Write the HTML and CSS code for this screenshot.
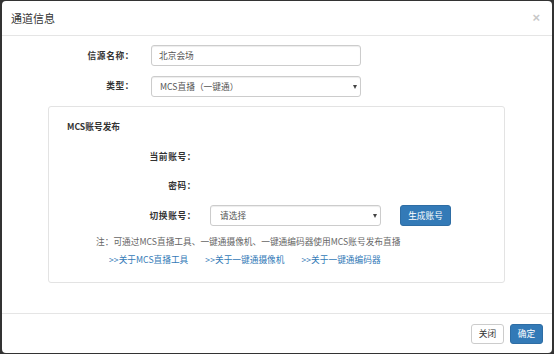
FILE: index.html
```html
<!DOCTYPE html>
<html>
<head>
  <title>通道信息</title>
  <link rel="stylesheet" href="styles.css">
</head>
<body>
  <div class="modal">
    <div class="modal-header">
      <h4 class="modal-title">通道信息</h4>
      <span class="close">&times;</span>
    </div>

    <div class="modal-body">
      <div class="form-row">
        <label class="control-label" for="source-name">信源名称：</label>
        <input type="text" id="source-name" class="form-control" value="北京会场">
      </div>

      <div class="form-row">
        <label class="control-label" for="type">类型：</label>
        <span class="select-wrap">
          <select id="type" class="form-control">
            <option>MCS直播（一键通）</option>
          </select>
        </span>
      </div>

      <div class="panel">
        <div class="panel-title">MCS账号发布</div>

        <div class="panel-row">
          <label class="control-label wide">当前账号：</label>
        </div>
        <div class="panel-row">
          <label class="control-label wide">密码：</label>
        </div>
        <div class="panel-row">
          <label class="control-label wide" for="account">切换账号：</label>
          <span class="select-wrap small">
            <select id="account" class="form-control">
              <option>请选择</option>
            </select>
          </span>
          <button class="btn btn-primary gen">生成账号</button>
        </div>

        <p class="note">注：可通过MCS直播工具、一键通摄像机、一键通编码器使用MCS账号发布直播</p>
        <div class="links">
          <a href="#">&gt;&gt;关于MCS直播工具</a>
          <a href="#">&gt;&gt;关于一键通摄像机</a>
          <a href="#">&gt;&gt;关于一键通编码器</a>
        </div>
      </div>
    </div>

    <div class="modal-footer">
      <button class="btn btn-default">关闭</button>
      <button class="btn btn-primary">确定</button>
    </div>
  </div>
</body>
</html>
```

FILE: styles.css
```css
body {
  margin: 0;
  background-color: #333;
  font-family: "Noto Sans CJK SC", "Liberation Sans", sans-serif;
  font-size: 8.7px;
  line-height: 12px;
  color: #333;
  height: 354px;
  overflow: hidden;
}

.modal {
  margin: 1px 0 0 2px;
  width: 550px;
  height: 352px;
  background-color: #fff;
  border-radius: 4px;
  display: flex;
  flex-direction: column;
}

.modal-header {
  height: 34px;
  border-bottom: 1px solid #e5e5e5;
  padding: 0 12px 0 9px;
  display: flex;
  align-items: center;
  justify-content: space-between;
}

.modal-title {
  margin: 0;
  font-size: 11px;
  font-weight: normal;
  color: #333;
}

.close {
  font-family: "Liberation Sans", sans-serif;
  font-size: 13px;
  font-weight: bold;
  color: #c8c8c8;
}

.modal-body {
  flex: 1;
  padding-top: 9px;
}

.form-row {
  display: flex;
  align-items: center;
  margin-bottom: 9.5px;
}

.control-label {
  width: 132px;
  text-align: right;
  font-weight: bold;
  letter-spacing: 0.6px;
  margin-right: 17px;
}

.control-label.wide {
  width: 129px;
  margin-right: 14px;
}

.form-control {
  box-sizing: border-box;
  width: 210px;
  height: 21px;
  padding: 0 7px;
  border: 1px solid #ccc;
  border-radius: 3px;
  box-shadow: inset 0 1px 1px rgba(0, 0, 0, .075);
  font-family: inherit;
  font-size: 8.7px;
  color: #555;
  background-color: #fff;
  outline: none;
}

.select-wrap {
  position: relative;
  display: inline-block;
}

.select-wrap select {
  appearance: none;
  -webkit-appearance: none;
  padding-left: 8px;
}

.select-wrap::after {
  content: "";
  position: absolute;
  right: 4px;
  top: 9px;
  border-left: 2.5px solid transparent;
  border-right: 2.5px solid transparent;
  border-top: 4px solid #444;
}

.select-wrap.small select {
  width: 171px;
  padding-left: 9px;
}

.panel {
  margin-left: 46px;
  width: 457px;
  box-sizing: border-box;
  height: 177px;
  border: 1px solid #e3e3e3;
  border-radius: 3px;
  padding: 14px 18px;
}

.panel-title {
  font-weight: bold;
  margin-bottom: 13px;
}

.panel-row {
  display: flex;
  align-items: center;
  height: 21px;
  margin-bottom: 8.5px;
}

.btn {
  box-sizing: border-box;
  height: 21px;
  padding: 0;
  border: 1px solid transparent;
  border-radius: 3px;
  font-family: inherit;
  font-size: 8.7px;
  white-space: nowrap;
  cursor: pointer;
}

.btn-primary {
  background-color: #337ab7;
  border-color: #2e6da4;
  color: #fff;
}

.btn-default {
  background-color: #fff;
  border-color: #ccc;
  color: #333;
}

.gen {
  margin-left: 19px;
  width: 51px;
}

.note {
  margin: 10px 0 0 29px;
  color: #666;
}

.links {
  margin: 6px 0 0 42px;
  display: flex;
  gap: 17px;
}

.links a {
  color: #337ab7;
  text-decoration: none;
}

.modal-footer {
  border-top: 1px solid #e5e5e5;
  padding: 10px 9px 9px 0;
  display: flex;
  justify-content: flex-end;
  gap: 6px;
}

.modal-footer .btn {
  width: 33px;
  height: 20.5px;
}
```
